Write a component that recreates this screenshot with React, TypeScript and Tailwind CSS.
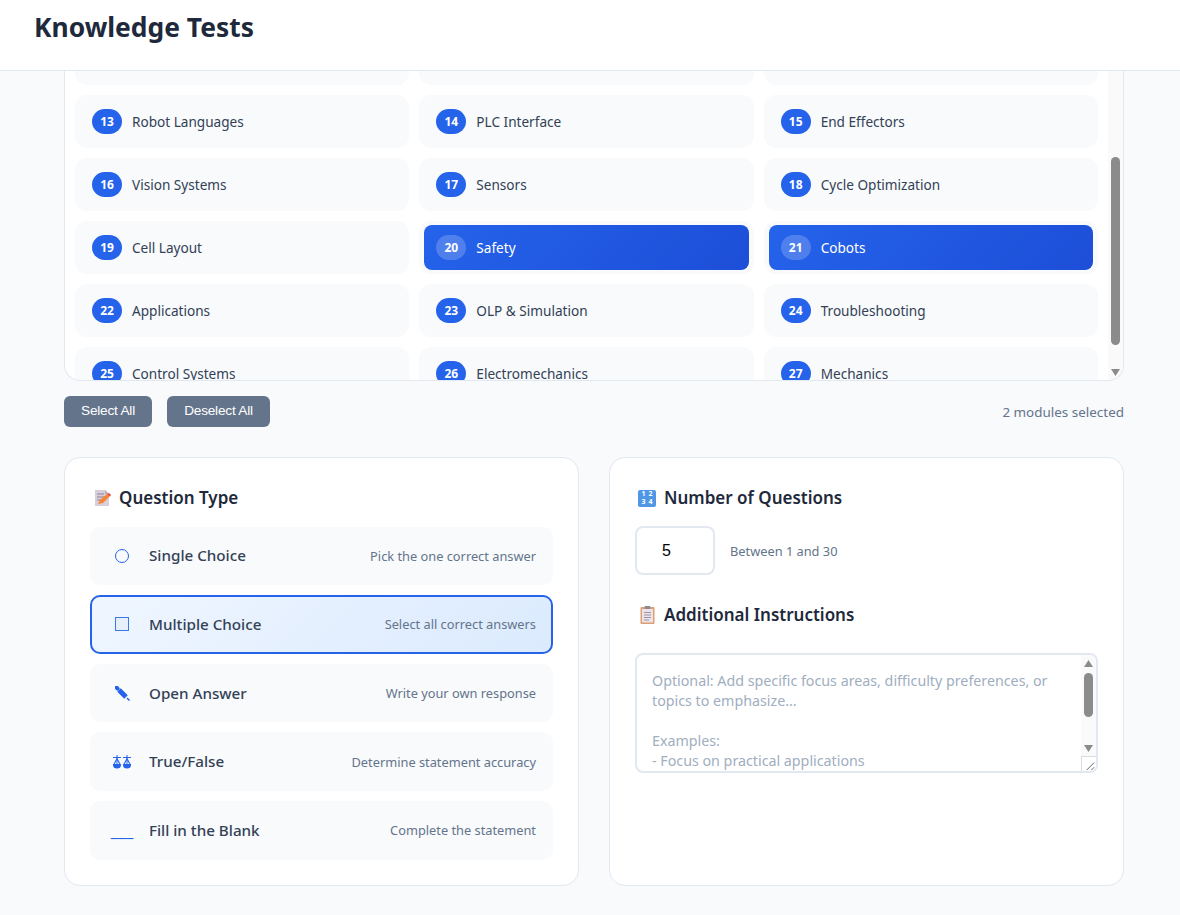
import { useState } from "react";

const modules = [
  ["", "", ""],
  ["", "", ""],
  ["", "", ""],
  ["13", "Robot Languages", ""],
  ["14", "PLC Interface", ""],
  ["15", "End Effectors", ""],
  ["16", "Vision Systems", ""],
  ["17", "Sensors", ""],
  ["18", "Cycle Optimization", ""],
  ["19", "Cell Layout", ""],
  ["20", "Safety", "on"],
  ["21", "Cobots", "on"],
  ["22", "Applications", ""],
  ["23", "OLP & Simulation", ""],
  ["24", "Troubleshooting", ""],
  ["25", "Control Systems", ""],
  ["26", "Electromechanics", ""],
  ["27", "Mechanics", ""],
];

function ModuleRow({ num, name, on }: { num: string; name: string; on: boolean }) {
  return (
    <div className="h-[53px] rounded-xl bg-[#f8fafc]">
      {num === "" ? null : on ? (
        <div className="mx-[5px] mt-1 flex h-[45px] items-center gap-[10px] rounded-lg bg-[linear-gradient(135deg,#2563eb,#1d4ed8)] pl-3 text-white">
          <span className="flex h-[25px] w-[30px] items-center justify-center rounded-full bg-white/20 text-[12px] font-bold">{num}</span>
          <span className="pt-px text-[13.600px]">{name}</span>
        </div>
      ) : (
        <div className="flex h-full items-center gap-[10px] pl-[17px] text-[#334155]">
          <span className="flex h-[25px] w-[30px] items-center justify-center rounded-full bg-[#2563eb] text-[12px] font-bold text-white">{num}</span>
          <span className="pt-px text-[13.600px]">{name}</span>
        </div>
      )}
    </div>
  );
}

function FakeScrollbar() {
  return (
    <div className="absolute right-0 top-0 h-full w-[15px] bg-[#fafafa]">
      <div className="absolute left-[3px] top-[86px] h-[188px] w-[9px] rounded-full bg-[#8b8b8b]" />
      <svg className="absolute left-[3px] bottom-[4px]" width="9" height="7" viewBox="0 0 9 7"><path d="M0 0h9L4.500 7z" fill="#8b8b8b" /></svg>
    </div>
  );
}

function NoteEmoji() {
  return (
    <svg width="17" height="18" viewBox="0 0 17 18">
      <path d="M1 1h10l4 4v12H1z" fill="#d9cfdc" />
      <path d="M11 1l4 4h-4z" fill="#b9aebd" />
      <path d="M3 5h7M3 8h9M3 11h4" stroke="#8d8492" strokeWidth="1" />
      <path d="M4 15l2-4 7-6 3 2-7 7z" fill="#f58534" />
      <path d="M13 5l2-1 2 2-1 1.500z" fill="#e8473f" />
    </svg>
  );
}

function NumbersEmoji() {
  return (
    <span className="grid h-[17px] w-[18px] grid-cols-2 rounded-[2px] bg-[#4f97e6] px-[2px] text-center text-[7px] font-bold leading-[8px] text-white">
      <span>1</span><span>2</span><span>3</span><span>4</span>
    </span>
  );
}

function ClipboardEmoji() {
  return (
    <svg width="15" height="18" viewBox="0 0 15 18">
      <rect x="0.500" y="1" width="14" height="17" rx="1" fill="#df9f73" />
      <rect x="2" y="3" width="11" height="13.500" fill="#eae3ea" />
      <path d="M4 6.500h7M4 9h7M4 11.500h7M4 14h5" stroke="#9d94a2" strokeWidth="1" />
      <rect x="4.500" y="0" width="6" height="3" rx="1" fill="#8c8a93" />
    </svg>
  );
}

function PenIcon() {
  return (
    <svg width="15" height="15" viewBox="0 0 15 15" fill="none" stroke="#2563eb" strokeLinecap="butt">
      <path d="M1 1L2.600 2.600" strokeWidth="4" strokeLinecap="round" />
      <path d="M4 4l7 7" strokeWidth="5" />
      <path d="M12 12l2.500 2.500" strokeWidth="1.500" />
    </svg>
  );
}

function ScaleIcon() {
  return (
    <svg width="18" height="14" viewBox="0 0 18 14" fill="#2563eb">
      <path d="M0 2h8v1H0zM10 2h8v1h-8z" />
      <path d="M3.500 0h1v9h-1zM13.500 0h1v9h-1z" />
      <path d="M4 2.500L0.500 9h1.200L4 5l2.300 4h1.200zM14 2.500L10.500 9h1.200L14 5l2.300 4h1.200z" />
      <path d="M0 9h8v1c0 2.500-1.500 3.500-4 3.500S0 12.500 0 10zM10 9h8v1c0 2.500-1.500 3.500-4 3.500s-4-1-4-3.500z" />
    </svg>
  );
}

const types = [
  { icon: <span className="h-[14px] w-[14px] rounded-full border-[1.500px] border-[#2563eb]" />, name: "Single Choice", desc: "Pick the one correct answer" },
  { icon: <span className="h-[14px] w-[14px] border-[1.500px] border-[#3b78e7] bg-[#e6f0fd]" />, name: "Multiple Choice", desc: "Select all correct answers", on: true },
  { icon: <PenIcon />, name: "Open Answer", desc: "Write your own response" },
  { icon: <ScaleIcon />, name: "True/False", desc: "Determine statement accuracy" },
  { icon: <span className="text-[17px] leading-none text-[#2563eb]">___</span>, name: "Fill in the Blank", desc: "Complete the statement" },
];

function TypeRow({ icon, name, desc, on }: { icon: React.ReactNode; name: string; desc: string; on?: boolean }) {
  return (
    <div
      className={
        on
          ? "flex h-[58.600px] items-center rounded-[10px] border-2 border-[#2563eb] bg-[linear-gradient(135deg,#eff6ff,#dbeafe)] pl-[18px] pr-[15px]"
          : "flex h-[58.600px] items-center rounded-[10px] bg-[#f8fafc] pl-5 pr-[17px]"
      }
    >
      <span className="flex w-[24px] justify-center">{icon}</span>
      <span className="ml-[15px] text-[15.200px] font-medium text-[#334155]">{name}</span>
      <span className="ml-auto pt-px text-[12.800px] text-[#64748b]">{desc}</span>
    </div>
  );
}

const placeholderText =
  "Optional: Add specific focus areas, difficulty preferences, or topics to emphasize...\n\nExamples:\n- Focus on practical applications\n- Include more questions on safety";

export default function App() {
  const [count, setCount] = useState("5");

  return (
    <div className="h-[915px] overflow-hidden bg-[#f8fafc] font-['Noto_Sans',sans-serif]">
      <header className="flex h-[71px] items-start border-b border-[#e2e8f0] bg-white px-[34px] pt-[8px]">
        <h1 className="text-[26.400px] font-bold leading-[38px] text-[#1e293b]">Knowledge Tests</h1>
      </header>

      <main className="pl-16 pr-14">
        <div className="relative h-[310px] overflow-hidden rounded-b-2xl border border-t-0 border-[#e2e8f0] bg-white">
          <div className="mr-[25px] ml-[10px] -mt-[39px] grid grid-cols-3 gap-[10px]">
            {modules.map((m, i) => (
              <ModuleRow key={i} num={m[0]} name={m[1]} on={m[2] === "on"} />
            ))}
          </div>
          <FakeScrollbar />
        </div>

        <div className="mt-[15px] flex items-center font-['Liberation_Sans',sans-serif]">
          <button className="h-[31px] w-[88px] rounded-md bg-[#64748b] text-[13.600px] tracking-[-0.2px] text-white">Select All</button>
          <button className="ml-[15px] h-[31px] w-[103px] rounded-md bg-[#64748b] text-[13.600px] tracking-[-0.2px] text-white">Deselect All</button>
          <span className="ml-auto pt-px font-['Noto_Sans',sans-serif] text-[13.440px] text-[#64748b]">2 modules selected</span>
        </div>

        <div className="mt-[30px] grid h-[429px] grid-cols-2 gap-[30px]">
          <section className="rounded-2xl border border-[#e2e8f0] bg-white px-[25px] pt-[25px]">
            <h2 className="flex h-[30px] items-center text-[17px] font-semibold leading-[30px] text-[#1e293b]">
              <span className="w-[29px] pl-[4px]"><NoteEmoji /></span>
              Question Type
            </h2>
            <div className="mt-[13.600px] flex flex-col gap-[10px]">
              {types.map((t) => (
                <TypeRow key={t.name} {...t} />
              ))}
            </div>
          </section>

          <section className="rounded-2xl border border-[#e2e8f0] bg-white px-[25px] pt-[25px]">
            <h2 className="flex h-[30px] items-center text-[17px] font-semibold leading-[30px] text-[#1e293b]">
              <span className="w-[29px] pl-[3px]"><NumbersEmoji /></span>
              Number of Questions
            </h2>
            <div className="mt-[13px] flex items-center gap-[15px]">
              <input
                value={count}
                onChange={(e) => setCount(e.target.value)}
                className="h-[49px] w-[80px] rounded-lg border-2 border-[#e2e8f0] pl-[25px] font-['Liberation_Sans',sans-serif] text-[16px] text-black outline-none"
              />
              <span className="pt-[2px] text-[12.800px] text-[#64748b]">Between 1 and 30</span>
            </div>
            <h2 className="mt-[25px] flex h-[30px] items-center text-[17px] font-semibold leading-[30px] text-[#1e293b]">
              <span className="w-[29px] pl-[5px]"><ClipboardEmoji /></span>
              Additional Instructions
            </h2>
            <div className="relative mt-[23px] h-[120px] overflow-hidden rounded-lg border-2 border-[#e2e8f0]">
              <textarea
                placeholder={placeholderText}
                className="h-full w-full resize-none overflow-hidden px-[15px] pt-[16px] pr-[30px] text-[14.250px] leading-[20px] outline-none placeholder:text-[#a0aec0]"
              />
              <div className="absolute right-0 top-0 h-full w-[15px] bg-[#fafafa]">
                <svg className="absolute left-[3px] top-[5px]" width="9" height="7" viewBox="0 0 9 7"><path d="M0 7h9L4.500 0z" fill="#8b8b8b" /></svg>
                <div className="absolute left-[3px] top-[18px] h-[44px] w-[9px] rounded-full bg-[#8b8b8b]" />
                <svg className="absolute left-[3px] top-[90px]" width="9" height="7" viewBox="0 0 9 7"><path d="M0 0h9L4.500 7z" fill="#8b8b8b" /></svg>
                <svg className="absolute bottom-0 right-0 border-l border-t border-[#dcdcdc] bg-white" width="15" height="15" viewBox="0 0 15 15"><path d="M5 14l8-8M10 14l3-3" stroke="#555" strokeWidth="1" /></svg>
              </div>
            </div>
          </section>
        </div>
      </main>
    </div>
  );
}
